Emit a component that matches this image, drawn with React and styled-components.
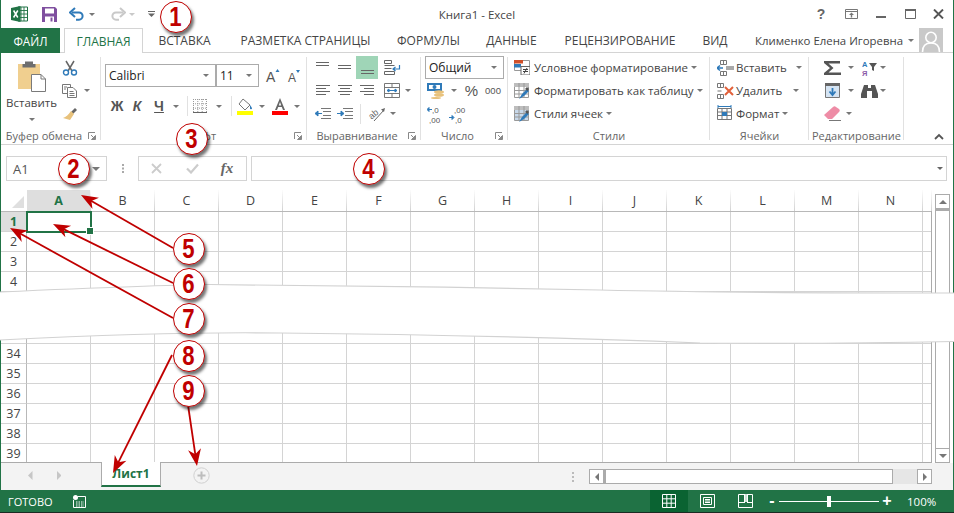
import React from "react";
import styled, { createGlobalStyle } from "styled-components";

const GlobalStyle = createGlobalStyle`
  html, body {
    margin: 0;
    padding: 0;
    overflow: hidden;
    background: #fff;
  }
  * { box-sizing: border-box; }
`;

const Window = styled.div`
  position: relative;
  display: flex;
  flex-direction: column;
  width: 954px;
  height: 513px;
  background: #fff;
  border-left: 1px solid #217346;
  border-right: 1px solid #217346;
  font-family: "Open Sans", "Noto Sans", sans-serif;
  font-size: 11.5px;
  color: #444;
`;

/* title bar */
const TitleBar = styled.div`
  display: flex;
  align-items: center;
  height: 28px;
  flex: none;
`;

const QuickSlot = styled.div`
  display: flex;
  align-items: center;
  justify-content: center;
  flex: none;
  width: ${p => p.$w}px;
  margin-left: ${p => p.$ml || 0}px;
`;

const TitleText = styled.div`
  position: absolute;
  left: 0;
  right: 0;
  top: 7px;
  text-align: center;
  font-size: 11.5px;
  color: #444;
  line-height: 16px;
`;

const WindowControls = styled.div`
  display: flex;
  align-items: center;
  margin-left: auto;
  padding-right: 1px;
`;

/* tabs */
const TabRow = styled.div`
  display: flex;
  align-items: stretch;
  height: 25px;
  flex: none;
  border-bottom: 1px solid #d4d4d4;
`;

const FileTab = styled.div`
  width: 59px;
  background: #217346;
  color: #fff;
  display: flex;
  align-items: center;
  justify-content: center;
  font-size: 11.8px;
  margin-bottom: -1px;
`;

const Tab = styled.div`
  width: ${p => p.$w}px;
  flex: none;
  display: flex;
  align-items: center;
  justify-content: center;
  font-size: 12px;
  color: ${p => (p.$active ? "#217346" : "#444")};
  background: #fff;
  ${p =>
    p.$active &&
    `
    margin-left: 4px;
    margin-bottom: -1px;
    border: 1px solid #d4d4d4;
    border-bottom: 0;
  `}
`;

const UserBox = styled.div`
  display: flex;
  align-items: center;
  margin-left: auto;
  padding-right: 5px;
  font-size: 11.4px;
  color: #444;
`;

const UserName = styled.span`
  margin-right: 5px;
`;

/* ribbon */
const Ribbon = styled.div`
  display: flex;
  height: 92px;
  flex: none;
  border-bottom: 1px solid #d4d4d4;
`;

const Group = styled.div`
  position: relative;
  display: flex;
  flex-direction: column;
  flex: none;
  width: ${p => p.$w}px;
  height: 91px;
  &::after {
    content: "";
    position: absolute;
    right: 0;
    top: 4px;
    bottom: 4px;
    width: 1px;
    background: ${p => (p.$plain ? "transparent" : "#e1e1e1")};
  }
`;

const GroupBody = styled.div`
  flex: 1;
  display: flex;
  flex-direction: ${p => p.$dir || "column"};
  padding: ${p => p.$pad || "3px 0 0 0"};
`;

const GroupLabel = styled.div`
  display: flex;
  justify-content: center;
  height: 14px;
  flex: none;
  margin-bottom: 1px;
  padding-right: ${p => (p.$launcher ? 14 : 0)}px;
  font-size: 11px;
  line-height: 14px;
  color: #666;
  white-space: nowrap;
`;

const Launcher = styled.svg`
  position: absolute;
  right: 5px;
  bottom: 4px;
  width: 8px;
  height: 8px;
`;

const CollapseButton = styled.div`
  position: absolute;
  right: 9px;
  bottom: 4px;
  display: flex;
`;

const BarRow = styled.div`
  display: flex;
  align-items: center;
  height: ${p => p.$h || 23}px;
  flex: none;
  padding-left: ${p => p.$left || 0}px;
  margin-top: ${p => p.$top || 0}px;
`;

const Slot = styled.div`
  display: flex;
  align-items: center;
  justify-content: center;
  flex: none;
  width: ${p => p.$w}px;
  height: 100%;
  background: ${p => (p.$on ? "#9fd5b7" : "transparent")};
`;

const Caret = styled.span`
  display: inline-block;
  flex: none;
  width: 0;
  height: 0;
  border-left: 3.5px solid transparent;
  border-right: 3.5px solid transparent;
  border-top: 3.5px solid ${p => p.$color || "#777"};
`;

const VSep = styled.div`
  width: 1px;
  height: 20px;
  flex: none;
  background: #e1e1e1;
`;

const PasteButton = styled.div`
  display: flex;
  flex-direction: column;
  align-items: center;
  width: 57px;
  padding: 5px 0 0 4px;
  font-size: 11.5px;
  line-height: 16px;
  color: #444;
`;

const PasteLabel = styled.span`
  margin: 3px 0 7px;
`;

const SmallColumn = styled.div`
  display: flex;
  flex-direction: column;
`;

const SelectBox = styled.div`
  display: flex;
  align-items: center;
  flex: none;
  width: ${p => p.$w}px;
  height: 23px;
  border: 1px solid #ababab;
  margin-left: ${p => p.$ml || 0}px;
  padding: 0 6px 0 3px;
  font-size: 12px;
  color: #222;
  & > span:first-child {
    flex: 1;
  }
`;

const FormatLetter = styled.span`
  font-family: "Liberation Sans", sans-serif;
  font-weight: bold;
  font-style: ${p => (p.$italic ? "italic" : "normal")};
  text-decoration: ${p => (p.$under ? "underline" : "none")};
  font-size: 14px;
  color: #555;
`;

const NumberGlyph = styled.span`
  font-family: "Liberation Sans", sans-serif;
  font-size: ${p => p.$size}px;
  color: #555;
`;

const StyleRow = styled.div`
  display: flex;
  align-items: center;
  height: 23px;
  flex: none;
  padding-left: ${p => p.$left}px;
  font-size: 11.5px;
  color: #444;
  white-space: nowrap;
`;

const StyleText = styled.span`
  margin: 0 ${p => p.$gap || 3}px 0 ${p => p.$lead || 4}px;
`;

/* formula bar */
const FormulaBar = styled.div`
  display: flex;
  align-items: flex-start;
  height: 45px;
  flex: none;
  padding: 11px 6px 0 5px;
`;

const NameBox = styled.div`
  display: flex;
  align-items: center;
  justify-content: space-between;
  width: 101px;
  height: 25px;
  border: 1px solid #d4d4d4;
  padding: 0 6px;
  font-size: 13px;
  color: #555;
`;

const Grip = styled.div`
  width: 31px;
  height: 25px;
  display: flex;
  align-items: center;
  justify-content: center;
`;

const FxBox = styled.div`
  display: flex;
  align-items: center;
  width: 109px;
  height: 25px;
  border: 1px solid #d4d4d4;
  padding-left: 5px;
`;

const FxSlot = styled.div`
  width: ${p => p.$w}px;
  display: flex;
  justify-content: center;
  flex: none;
`;

const FxText = styled.span`
  font-family: "Liberation Serif", serif;
  font-style: italic;
  font-weight: 700;
  font-size: 15px;
  color: #666;
`;

const FormulaInput = styled.div`
  flex: 1;
  height: 25px;
  margin-left: 4px;
  border: 1px solid #d4d4d4;
  display: flex;
  align-items: center;
  justify-content: flex-end;
  padding-right: 3px;
`;

/* sheet */
const SheetArea = styled.div`
  display: flex;
  height: 273px;
  flex: none;
`;

const Grid = styled.div`
  width: 931px;
  flex: none;
  display: flex;
  flex-direction: column;
  overflow: hidden;
  border-bottom: 1px solid #ababab;
`;

const Row = styled.div`
  display: flex;
  flex: none;
  height: ${p => p.$h || 20}px;
`;

const RowHead = styled.div`
  width: 26px;
  flex: none;
  display: flex;
  align-items: center;
  justify-content: center;
  border-right: 1px solid #b8b8b8;
  border-bottom: 1px solid #d4d4d4;
  font-size: 12.5px;
  font-weight: ${p => (p.$on ? 700 : 400)};
  color: ${p => (p.$on ? "#217346" : "#444")};
  background: ${p => (p.$on ? "#dedede" : "#fff")};
`;

const Corner = styled.div`
  width: 26px;
  flex: none;
  display: flex;
  align-items: flex-end;
  justify-content: flex-end;
  padding: 0 3px 3px 0;
  &::before {
    content: "";
    width: 0;
    height: 0;
    border-left: 12px solid transparent;
    border-bottom: 12px solid #dfdfdf;
  }
`;

const ColHead = styled.div`
  width: ${p => p.$w || 64}px;
  flex: none;
  display: flex;
  align-items: center;
  justify-content: center;
  font-size: 12.5px;
  font-weight: ${p => (p.$on ? 700 : 400)};
  color: ${p => (p.$on ? "#217346" : "#444")};
  background: ${p => (p.$on ? "#dedede" : "#fff")};
  border-style: solid;
  border-width: 0 1px 0 0;
  border-image: linear-gradient(#fff, #cfcfcf) 1;
`;

const ColHeadRow = styled(Row)`
  border-bottom: 1px solid #b8b8b8;
`;

const Cell = styled.div`
  width: ${p => p.$w || 64}px;
  flex: none;
  border-right: 1px solid #d4d4d4;
  border-bottom: 1px solid #d4d4d4;
`;

const ActiveCell = styled.div`
  position: relative;
  width: 64px;
  flex: none;
  outline: 2px solid #217346;
  outline-offset: -1px;
  &::after {
    content: "";
    position: absolute;
    right: -3px;
    bottom: -3px;
    width: 6px;
    height: 6px;
    background: #217346;
    border: 1px solid #fff;
  }
`;

const SheetEdge = styled.div`
  width: 1px;
  flex: none;
  margin: 21px 0 0 -1px;
  background: #ababab;
`;

const VScroll = styled.div`
  display: flex;
  flex-direction: column;
  width: 15px;
  flex: none;
  margin: 4px 0 0 3px;
`;

const ScrollButton = styled.div`
  width: 15px;
  height: 15px;
  flex: none;
  display: flex;
  align-items: center;
  justify-content: center;
  border: 1px solid #ababab;
  background: #fff;
`;

const VThumb = styled.div`
  flex: 1;
  border: 1px solid #ababab;
  border-top: 2px solid #ababab;
  border-bottom: 0;
  background: #fff;
`;

/* sheet tabs */
const TabBar = styled.div`
  display: flex;
  align-items: flex-start;
  height: 27px;
  flex: none;
  background: #f3f3f3;
`;

const NavArrows = styled.div`
  display: flex;
  align-items: center;
  justify-content: space-between;
  width: 100px;
  height: 25px;
  padding: 0 40px 0 27px;
`;

const SheetTab = styled.div`
  width: 60px;
  height: 25px;
  margin-top: -1px;
  display: flex;
  align-items: center;
  justify-content: center;
  background: #fff;
  border-left: 1px solid #ababab;
  border-right: 1px solid #ababab;
  border-bottom: 2px solid #217346;
  color: #217346;
  font-weight: 700;
  font-size: 12px;
`;

const AddSheet = styled.div`
  display: flex;
  align-items: center;
  height: 25px;
  margin-left: 32px;
`;

const HScroll = styled.div`
  display: flex;
  align-items: center;
  margin: 6px 0 0 auto;
  padding-right: 21px;
`;

const Dots = styled.div`
  display: flex;
  flex-direction: column;
  gap: 2px;
  margin-right: 15px;
  span {
    width: 2px;
    height: 2px;
    background: #bbb;
  }
`;

const HThumb = styled.div`
  width: 289px;
  height: 15px;
  background: #fff;
  border: 1px solid #ababab;
  border-left-width: 2px;
`;

const HTrack = styled.div`
  width: 24px;
  height: 15px;
  background: #e6e6e6;
`;

/* status bar */
const StatusBar = styled.div`
  display: flex;
  align-items: stretch;
  flex: 1;
  margin: 0 -1px;
  background: #217346;
  color: #fff;
  border-bottom: 1px solid #1b2a22;
  font-size: 11px;
`;

const StatusText = styled.span`
  display: flex;
  align-items: center;
  padding-left: 8px;
  width: 73px;
`;

const StatusIcon = styled.div`
  display: flex;
  align-items: center;
`;

const ViewButtons = styled.div`
  display: flex;
  margin-left: auto;
`;

const ViewButton = styled.div`
  width: 38px;
  display: flex;
  align-items: center;
  justify-content: center;
  background: ${p => (p.$on ? "#0a6332" : "transparent")};
`;

const Zoom = styled.div`
  display: flex;
  align-items: center;
  width: 190px;
  padding-left: 5px;
`;

const ZoomTrack = styled.div`
  position: relative;
  width: 100px;
  height: 1px;
  margin: 0 5px 0 4px;
  background: #fff;
  &::after {
    content: "";
    position: absolute;
    left: 48px;
    top: -5px;
    width: 4px;
    height: 11px;
    background: #fff;
  }
`;

const ZoomSign = styled.span`
  width: 6px;
  display: flex;
  justify-content: center;
  font-family: "Liberation Sans", sans-serif;
  font-weight: 700;
  font-size: 16px;
`;

const ZoomValue = styled.span`
  margin-left: 17px;
  font-size: 11.5px;
`;

/* overlays */
const TearSvg = styled.svg`
  position: absolute;
  left: -1px;
  top: 280px;
  width: 954px;
  height: 70px;
`;

const ArrowLayer = styled.svg`
  position: absolute;
  left: -1px;
  top: 0;
  width: 954px;
  height: 513px;
  pointer-events: none;
`;

const Callout = styled.div`
  position: absolute;
  left: ${p => p.$x - 17}px;
  top: ${p => p.$y - 16}px;
  width: 32px;
  height: 32px;
  border-radius: 50%;
  background: #fff;
  border: 1px solid #c00000;
  box-shadow: 2px 3px 3px rgba(0, 0, 0, 0.55);
  display: flex;
  align-items: center;
  justify-content: center;
  color: #c00000;
  font-family: "Liberation Sans", sans-serif;
  font-weight: 700;
  font-size: 27px;
  line-height: 1;
  & > span {
    display: block;
    transform: scaleX(0.82);
  }
`;

const HelpMark = styled.span`
  font-family: "Liberation Sans", sans-serif;
  font-weight: 700;
  font-size: 14px;
  color: #666;
`;

/* icons */
const Excel = () => (
  <svg width="17" height="16" viewBox="0 0 17 16">
    <path d="M7 1h9.500v14H7z" fill="#fff" stroke="#217346" />
    <path d="M10 1v14M13 1v14M7 4.500h9.500M7 8h9.500M7 11.500h9.500" stroke="#217346" strokeWidth=".9" />
    <path d="M0 2l9.500-2v16L0 14z" fill="#217346" />
    <path d="M2.600 4.500l4.200 7M6.800 4.500l-4.200 7" stroke="#fff" strokeWidth="1.500" />
  </svg>
);

const Save = () => (
  <svg width="15" height="15" viewBox="0 0 15 15">
    <path d="M0 0h13l2 2v13H0z" fill="#7f4f9f" />
    <path d="M3 1.500h9v5H3z" fill="#fff" />
    <path d="M3 9.500h9V15H3z" fill="#fff" />
    <path d="M8.500 10.500h2v4h-2z" fill="#7f4f9f" />
  </svg>
);

const Undo = ({ color = "#2f7ab9", flip }) => (
  <svg width="16" height="14" viewBox="0 0 16 14" style={flip ? { transform: "scaleX(-1)" } : undefined}>
    <path d="M3 5.500h7a3.600 3.600 0 0 1 0 7.200H7" fill="none" stroke={color} strokeWidth="2" />
    <path d="M6 1L1 5.500 6 10" fill="none" stroke={color} strokeWidth="2" />
  </svg>
);

const QatMenu = () => (
  <svg width="7" height="6" viewBox="0 0 7 6">
    <path d="M0 0h7v1H0z" fill="#666" />
    <path d="M0 2.500h7L3.500 6z" fill="#666" />
  </svg>
);

const RibbonMode = () => (
  <svg width="13" height="10" viewBox="0 0 13 10">
    <path d="M.5.500h12v9H.5z" fill="none" stroke="#777" />
    <path d="M0 2.500h13" stroke="#777" />
    <path d="M6.500 3.500L4 6h1.800v2.500h1.400V6H9z" fill="#777" />
  </svg>
);

const MinIcon = () => (
  <svg width="11" height="10" viewBox="0 0 11 10">
    <path d="M0 7h10v2H0z" fill="#666" />
  </svg>
);

const MaxIcon = () => (
  <svg width="11" height="10" viewBox="0 0 11 10">
    <path d="M.5 1.500h10v8H.5z" fill="none" stroke="#666" />
    <path d="M0 0h11v2H0z" fill="#666" />
  </svg>
);

const CloseIcon = () => (
  <svg width="11" height="10" viewBox="0 0 11 10">
    <path d="M1 .5l9 9M10 .5l-9 9" stroke="#555" strokeWidth="1.900" />
  </svg>
);

const Avatar = () => (
  <svg width="24" height="24" viewBox="0 0 24 24">
    <path d="M0 0h24v24H0z" fill="#c9c9c9" />
    <circle cx="12" cy="9.500" r="5.200" fill="none" stroke="#fff" strokeWidth="1.600" />
    <path d="M3.500 24c0-6 3.500-9 8.500-9s8.500 3 8.500 9" fill="none" stroke="#fff" strokeWidth="1.600" />
  </svg>
);

const PasteIcon = () => (
  <svg width="30" height="31" viewBox="0 0 30 31">
    <path d="M1 3h22v25H1z" fill="#f0cf8f" />
    <path d="M8 3V.5h8V3h2.500v3.500h-13V3z" fill="#6e6e6e" />
    <path d="M14.500 13.500H24l4.500 4.500v12.500h-14z" fill="#fff" stroke="#7a7a7a" />
    <path d="M24 13.500V18h4.500" fill="none" stroke="#7a7a7a" />
  </svg>
);

const Scissors = () => (
  <svg width="16" height="16" viewBox="0 0 16 16">
    <path d="M4 1l6 10M12 1L6 11" stroke="#666" strokeWidth="1.500" />
    <circle cx="4" cy="12.500" r="2.500" fill="none" stroke="#2f7ab9" strokeWidth="1.400" />
    <circle cx="12" cy="12.500" r="2.500" fill="none" stroke="#2f7ab9" strokeWidth="1.400" />
  </svg>
);

const CopyIcon = () => (
  <svg width="16" height="14" viewBox="0 0 16 14">
    <path d="M.5.500h8v9h-8z" fill="#fff" stroke="#777" />
    <path d="M5.500 3.500H11L14.500 7v6.500h-9z" fill="#fff" stroke="#777" />
    <path d="M2 3h3M2 5h2M7.500 7.500h4M7.500 9.500h5M7.500 11.500h5" stroke="#777" />
  </svg>
);

const Painter = () => (
  <svg width="16" height="14" viewBox="0 0 16 14">
    <path d="M9 5l4-4 2 2-4 4z" fill="#666" />
    <path d="M9 4l3 3-4 6-7-2c3-1 5-3 8-7z" fill="#e8c27c" />
  </svg>
);

const GrowA = ({ up }) => (
  <svg width="20" height="16" viewBox="0 0 20 16">
    <text x="5" y="14" fontFamily="Liberation Sans, sans-serif" fontSize={up ? 14 : 12} fill="#555">
      A
    </text>
    <path d={up ? "M14.500 4h4l-2-3z" : "M13 2h4l-2 3z"} fill="#2f7ab9" />
  </svg>
);

const BorderIcon = () => (
  <svg width="14" height="14" viewBox="0 0 14 14">
    <path
      d="M.5 0v14M4.800 0v14M9.200 0v14M13.500 0v14M0 .5h14M0 4.800h14M0 9.200h14"
      stroke="#999"
      strokeDasharray="1 1"
      fill="none"
    />
    <path d="M0 13.500h14" stroke="#666" />
  </svg>
);

const FillIcon = () => (
  <svg width="16" height="17" viewBox="0 0 16 17">
    <path d="M6 1l7 6-5 5-6-6z" fill="#fff" stroke="#777" />
    <path d="M13 7c1 1.500 2 2.500 2 3.500s-2 1-2 0z" fill="#2f7ab9" />
    <path d="M0 13h16v4H0z" fill="#ffff00" />
  </svg>
);

const ColorA = () => (
  <svg width="16" height="17" viewBox="0 0 16 17">
    <path d="M3 12L8 0l5 12h-2L9.800 9H6.200L5 12zM6.800 7.500h2.400L8 4z" fill="#666" fillRule="evenodd" />
    <path d="M0 13h16v4H0z" fill="#ff0000" />
  </svg>
);

const Launch = () => (
  <Launcher viewBox="0 0 8 8">
    <path d="M.5 7V.5H7" fill="none" stroke="#888" />
    <path d="M3 3l3.500 3.500M7.500 3.500v4h-4z" fill="#888" stroke="#888" />
  </Launcher>
);

const Lines = ({ rows }) => (
  <svg width="14" height="13" viewBox="0 0 14 13">
    {rows.map(([y, x1, x2]) => (
      <path key={y} d={`M${x1} ${y}.5H${x2}`} stroke="#666" />
    ))}
  </svg>
);

const WrapIcon = () => (
  <svg width="17" height="15" viewBox="0 0 17 15">
    <path d="M.5.500h7v3h-7zM.5 5.500h10M.5 8.500h7M.5 11.500h10v3H.5z" fill="none" stroke="#666" />
    <path d="M15.500 5v4h-6M11.500 7L9 9l2.500 2" fill="none" stroke="#2f7ab9" strokeWidth="1.200" />
  </svg>
);

const MergeIcon = () => (
  <svg width="16" height="15" viewBox="0 0 16 15">
    <path d="M.5.500h15v14H.5zM.5 4.500h15M.5 10.500h15M8 .5v4M8 10.500v4" fill="none" stroke="#777" />
    <path d="M3 7.500h10M3 7.500L5 6v3zM13 7.500L11 6v3z" fill="#2f7ab9" stroke="#2f7ab9" />
  </svg>
);

const IndentIcon = ({ right }) => (
  <svg width="16" height="11" viewBox="0 0 16 11">
    <path d="M6 .5h10M8 3.500h8M8 7.500h8M6 10.500h10" stroke="#777" />
    {right ? (
      <path d="M0 5.500h4M7 5.500L4 3v5z" stroke="#2f7ab9" fill="#2f7ab9" />
    ) : (
      <path d="M7 5.500H3M0 5.500L3 3v5z" stroke="#2f7ab9" fill="#2f7ab9" />
    )}
  </svg>
);

const OrientIcon = () => (
  <svg width="22" height="18" viewBox="0 0 22 18">
    <text x="3" y="12" transform="rotate(-40 8 10)" fontFamily="Liberation Sans, sans-serif" fontSize="9" fill="#666">
      ab
    </text>
    <path d="M8 16L18 5" stroke="#666" />
    <path d="M19 3l-1 4-3-2.500z" fill="#666" />
  </svg>
);

const CurrencyIcon = () => (
  <svg width="18" height="16" viewBox="0 0 18 16">
    <path d="M0 0h15v8H0z" fill="#2f7ab9" />
    <path d="M2 2h11v4H2z" fill="#fff" />
    <circle cx="7.500" cy="4" r="2" fill="#2f7ab9" />
    <ellipse cx="12" cy="9" rx="5" ry="1.800" fill="#e8c27c" />
    <ellipse cx="12" cy="12" rx="5" ry="1.800" fill="#e8c27c" />
    <ellipse cx="9" cy="15" rx="5" ry="1" fill="#e8c27c" />
  </svg>
);

const DecimalIcon = ({ more }) => (
  <svg width="19" height="20" viewBox="0 0 19 20">
    <text x="5" y="9" fontFamily="Liberation Sans, sans-serif" fontSize="8" fill="#555">
      {more ? ",00" : ",0"}
    </text>
    <text x={more ? 6 : 2} y="18.500" fontFamily="Liberation Sans, sans-serif" fontSize="8" fill="#555">
      {more ? ",0" : ",00"}
    </text>
    <path
      d={more ? "M0 13.500h4M5 13.500l-2-2v4z" : "M1 5.500h4M0 5.500l2-2v4z"}
      stroke="#2f7ab9"
      fill="#2f7ab9"
    />
  </svg>
);

const CondIcon = () => (
  <svg width="16" height="15" viewBox="0 0 16 15">
    <path d="M.5.500h15v10H.5z" fill="#fff" stroke="#999" />
    <path d="M0 0h9v3.500H0z" fill="#d0502a" />
    <path d="M0 4h7v3.500H0z" fill="#2f7ab9" />
    <path d="M7 6.500h9V15H7z" fill="#fff" stroke="#666" />
    <path d="M9 9.500h5M9 11.500h5M13 8l-3 5.500" stroke="#444" />
  </svg>
);

const TableIcon = ({ pale }) => (
  <svg width="16" height="16" viewBox="0 0 16 16">
    <path d="M.5.500h14v14H.5z" fill={pale ? "#c7d8ea" : "#fff"} stroke="#999" />
    <path d="M0 0h15v4H0z" fill="#bdbdbd" />
    <path d="M5 0v15M10 0v15M0 7.500h15M0 11h15" stroke="#999" />
    <path d="M5 16l3-5 5-5 2 2-5 5z" fill="#2f7ab9" />
    <path d="M11 6l2-2 2 2-1.500 2z" fill="#555" />
  </svg>
);

const CellsInsert = () => (
  <svg width="17" height="16" viewBox="0 0 17 16">
    <path d="M3.500.500h6v4h-6zM3.500 11.500h6v4h-6zM6.500.5v4M6.500 11.500v4" fill="none" stroke="#777" />
    <path d="M9 6h8v4H9z" fill="#a9a9a9" />
    <path d="M0 8h6M3 5.500L0 8l3 2.500" fill="none" stroke="#2f7ab9" strokeWidth="1.600" />
  </svg>
);

const CellsDelete = () => (
  <svg width="17" height="16" viewBox="0 0 17 16">
    <path d="M.5.500h6v4h-6zM.5 11.500h6v4h-6zM3.500.5v4M3.500 11.500v4M.5 8h4" fill="none" stroke="#777" />
    <path d="M8 4l8 8M16 4l-8 8" stroke="#e2603a" strokeWidth="2" />
  </svg>
);

const CellsFormat = () => (
  <svg width="17" height="17" viewBox="0 0 17 17">
    <path d="M1 0v3M14 0v3M1 1.500h13" stroke="#2f7ab9" />
    <path d="M.5 3.500h14v11H.5zM.5 7h14M.5 10.500h14M5 3.500v11M10 3.500v11" fill="none" stroke="#777" />
    <path d="M5 7h5v4H5z" fill="#2f7ab9" />
  </svg>
);

const SigmaIcon = () => (
  <svg width="17" height="14" viewBox="0 0 17 14">
    <path d="M0 0h16v2.500H4.500l5 4.500-5 4.500H17V14H0v-2l6-5-6-5z" fill="#555" />
  </svg>
);

const SortIcon = () => (
  <svg width="15" height="19" viewBox="0 0 15 19">
    <text x="0" y="9" fontFamily="Liberation Sans, sans-serif" fontWeight="700" fontSize="7.500" fill="#2f7ab9">
      А
    </text>
    <text x="0" y="18" fontFamily="Liberation Sans, sans-serif" fontWeight="700" fontSize="7.500" fill="#8a5aa8">
      Я
    </text>
    <path d="M7 5h8l-3 4v4l-2-1V9z" fill="#555" />
  </svg>
);

const FillDown = () => (
  <svg width="15" height="15" viewBox="0 0 15 15">
    <path d="M.5 1.500h14v13H.5z" fill="#d5e4f3" stroke="#777" />
    <path d="M0 0h15v3H0z" fill="#666" />
    <path d="M7.500 5v6M4.500 8.500l3 3.500 3-3.500" fill="none" stroke="#2f7ab9" strokeWidth="1.800" />
  </svg>
);

const Binoculars = () => (
  <svg width="17" height="14" viewBox="0 0 17 14">
    <path d="M3 1h4v3h3V1h4l3 9v4h-6V7H6v7H0v-4z" fill="#555" />
  </svg>
);

const Eraser = () => (
  <svg width="17" height="15" viewBox="0 0 17 15">
    <path d="M0 9l9-8c1-1 2-1 3 0l3 2c1 1 1 2 0 3l-7 7H4z" fill="#ee8ca6" />
    <path d="M5 14.500h12" stroke="#777" />
  </svg>
);

const ChevronUp = () => (
  <svg width="10" height="7" viewBox="0 0 10 7">
    <path d="M1 6l4-4 4 4" fill="none" stroke="#555" strokeWidth="1.800" />
  </svg>
);

const Triangle = ({ dir, color = "#777", s = 4 }) => {
  const d = {
    left: "M4 0v8L0 4z",
    right: "M0 0v8l4-4z",
    up: "M0 4h8L4 0z",
    down: "M0 0h8L4 4z"
  }[dir];
  const wide = dir === "up" || dir === "down";
  return (
    <svg width={wide ? s * 2 : s} height={wide ? s : s * 2} viewBox={wide ? "0 0 8 4" : "0 0 4 8"}>
      <path d={d} fill={color} />
    </svg>
  );
};

const AddIcon = () => (
  <svg width="17" height="17" viewBox="0 0 17 17">
    <circle cx="8.500" cy="8.500" r="7.700" fill="none" stroke="#d0d0d0" />
    <path d="M4.500 8.500h8M8.500 4.500v8" stroke="#bdbdbd" strokeWidth="2" />
  </svg>
);

const MacroIcon = () => (
  <svg width="13" height="13" viewBox="0 0 13 13">
    <path d="M4.500 1.500h8v11H.5V5" fill="none" stroke="#fff" />
    <circle cx="2.500" cy="2.500" r="2.500" fill="#fff" />
    <path d="M3 7h8M3 9h8M3 11h8" stroke="#fff" strokeDasharray="1.500 1" />
  </svg>
);

const ViewNormal = () => (
  <svg width="14" height="14" viewBox="0 0 14 14">
    <path d="M.5.500h13v13H.5zM.5 4.800h13M.5 9.200h13M4.800.5v13M9.200.5v13" fill="none" stroke="#fff" />
  </svg>
);

const ViewLayout = () => (
  <svg width="15" height="14" viewBox="0 0 15 14">
    <path d="M.5.500h14v13H.5zM3.500 3.500h8v7h-8z" fill="none" stroke="#fff" />
    <path d="M5 5.500h5M5 7h5M5 8.500h5" stroke="#fff" />
  </svg>
);

const ViewBreak = () => (
  <svg width="15" height="14" viewBox="0 0 15 14">
    <path d="M.5.500h14v13H.5z" fill="none" stroke="#fff" />
    <path d="M6 0h3v8H6z" fill="#cfe3d8" />
    <path d="M0 8h6V0h1v9H0zM9 0h1v8h5v1H9z" fill="#fff" />
  </svg>
);

const Arrow = ({ x1, y1, x2, y2 }) => {
  const dx = x2 - x1;
  const dy = y2 - y1;
  const len = Math.hypot(dx, dy);
  const ux = dx / len;
  const uy = dy / len;
  const px = -uy;
  const py = ux;
  const pt = (along, side) => `${x2 - ux * along + px * side},${y2 - uy * along + py * side}`;
  return (
    <g>
      <line x1={x1} y1={y1} x2={x2 - ux * 10} y2={y2 - uy * 10} stroke="#c00000" strokeWidth="1.800" />
      <polygon points={`${x2},${y2} ${pt(17, 6.5)} ${pt(12, 0)} ${pt(17, -6.5)}`} fill="#c00000" />
    </g>
  );
};

const columns = ["A", "B", "C", "D", "E", "F", "G", "H", "I", "J", "K", "L", "M", "N"];
const topRows = [1, 2, 3, 4];
const bottomRows = [34, 35, 36, 37, 38, 39];

const arrows = [
  { x1: 173, y1: 248, x2: 81, y2: 195 },
  { x1: 173, y1: 283, x2: 53, y2: 224 },
  { x1: 173, y1: 318, x2: 10, y2: 228 },
  { x1: 172, y1: 355, x2: 113, y2: 473 },
  { x1: 188, y1: 405, x2: 197, y2: 466 }
];

const callouts = [
  { n: 1, x: 176, y: 17 },
  { n: 2, x: 74, y: 169 },
  { n: 3, x: 192, y: 139 },
  { n: 4, x: 369, y: 169 },
  { n: 5, x: 189, y: 249 },
  { n: 6, x: 189, y: 284 },
  { n: 7, x: 189, y: 319 },
  { n: 8, x: 189, y: 356 },
  { n: 9, x: 189, y: 391 }
];

const TOP_EDGE = "M0 12 C90 8 160 5 210 4.5 C320 5 474 7.5 600 10 C690 12 800 13 954 13";
const BOTTOM_EDGE = "M954 61.5 C860 63.5 760 63.5 700 63 C600 59 474 55 280 53 C210 52 100 55 0 60";

const SheetRow = ({ label, selected }) => (
  <Row>
    <RowHead $on={selected}>{label}</RowHead>
    {columns.map(c =>
      selected && c === "A" ? <ActiveCell key={c} /> : <Cell key={c} />
    )}
    <Cell $w={9} />
  </Row>
);

function App() {
  return (
    <>
      <GlobalStyle />
      <Window>
        <TitleBar>
          <QuickSlot $w={37}><Excel /></QuickSlot>
          <QuickSlot $w={22}><Save /></QuickSlot>
          <QuickSlot $ml={9} $w={16}><Undo /></QuickSlot>
          <QuickSlot $ml={3} $w={8}><Caret /></QuickSlot>
          <QuickSlot $ml={14} $w={16}><Undo color="#c9c9c9" flip /></QuickSlot>
          <QuickSlot $ml={2} $w={8}><Caret $color="#c9c9c9" /></QuickSlot>
          <QuickSlot $ml={11} $w={8}><QatMenu /></QuickSlot>
          <TitleText>Книга1 - Excel</TitleText>
          <WindowControls>
            <QuickSlot $w={30}><HelpMark>?</HelpMark></QuickSlot>
            <QuickSlot $w={30}><RibbonMode /></QuickSlot>
            <QuickSlot $w={30}><MinIcon /></QuickSlot>
            <QuickSlot $w={28}><MaxIcon /></QuickSlot>
            <QuickSlot $w={28}><CloseIcon /></QuickSlot>
          </WindowControls>
        </TitleBar>

        <TabRow>
          <FileTab>ФАЙЛ</FileTab>
          <Tab $active $w={79}>ГЛАВНАЯ</Tab>
          <Tab $w={83}>ВСТАВКА</Tab>
          <Tab $w={159}>РАЗМЕТКА СТРАНИЦЫ</Tab>
          <Tab $w={87}>ФОРМУЛЫ</Tab>
          <Tab $w={79}>ДАННЫЕ</Tab>
          <Tab $w={138}>РЕЦЕНЗИРОВАНИЕ</Tab>
          <Tab $w={52}>ВИД</Tab>
          <UserBox>
            <UserName>Клименко Елена Игоревна</UserName>
            <Caret />
            <QuickSlot $w={34}><Avatar /></QuickSlot>
          </UserBox>
        </TabRow>

        <Ribbon>
          <Group $w={100}>
            <GroupBody $dir="row">
              <PasteButton>
                <PasteIcon />
                <PasteLabel>Вставить</PasteLabel>
                <Caret />
              </PasteButton>
              <SmallColumn>
                <BarRow><Slot $w={24}><Scissors /></Slot></BarRow>
                <BarRow>
                  <Slot $w={24}><CopyIcon /></Slot>
                  <Slot $w={10}><Caret /></Slot>
                </BarRow>
                <BarRow><Slot $w={24}><Painter /></Slot></BarRow>
              </SmallColumn>
            </GroupBody>
            <GroupLabel $launcher>Буфер обмена</GroupLabel>
            <Launch />
          </Group>

          <Group $w={206}>
            <GroupBody $pad="11px 0 0 0">
              <BarRow $left={4}>
                <SelectBox $w={111}>
                  <span>Calibri</span>
                  <Caret />
                </SelectBox>
                <SelectBox $w={43}>
                  <span>11</span>
                  <Caret />
                </SelectBox>
                <Slot $w={24}><GrowA up /></Slot>
                <Slot $w={20}><GrowA /></Slot>
              </BarRow>
              <BarRow $h={22} $top={8} $left={6}>
                <Slot $w={20}><FormatLetter>Ж</FormatLetter></Slot>
                <Slot $w={20}><FormatLetter $italic>К</FormatLetter></Slot>
                <Slot $w={24}><FormatLetter $under>Ч</FormatLetter></Slot>
                <Slot $w={10}><Caret /></Slot>
                <Slot $w={12}><VSep /></Slot>
                <Slot $w={14}><BorderIcon /></Slot>
                <Slot $w={24}><Caret /></Slot>
                <VSep />
                <Slot $w={26}><FillIcon /></Slot>
                <Slot $w={8}><Caret /></Slot>
                <Slot $w={28}><ColorA /></Slot>
                <Slot $w={6}><Caret /></Slot>
              </BarRow>
            </GroupBody>
            <GroupLabel $launcher>Шрифт</GroupLabel>
            <Launch />
          </Group>

          <Group $w={114}>
            <GroupBody>
              <BarRow $left={5}>
                <Slot $w={22}><Lines rows={[[1, 0, 13], [4, 0, 13]]} /></Slot>
                <Slot $w={22}><Lines rows={[[4, 0, 13], [7, 0, 13]]} /></Slot>
                <Slot $w={22} $on><Lines rows={[[9, 1, 14], [12, 1, 14]]} /></Slot>
                <Slot $w={28}><WrapIcon /></Slot>
              </BarRow>
              <BarRow $left={5}>
                <Slot $w={22}><Lines rows={[[1, 0, 14], [4, 0, 10], [7, 0, 14], [10, 0, 10]]} /></Slot>
                <Slot $w={22}><Lines rows={[[1, 0, 14], [4, 2, 12], [7, 0, 14], [10, 2, 12]]} /></Slot>
                <Slot $w={22}><Lines rows={[[1, 0, 14], [4, 4, 14], [7, 0, 14], [10, 4, 14]]} /></Slot>
                <Slot $w={28}><MergeIcon /></Slot>
                <Slot $w={4}><Caret /></Slot>
              </BarRow>
              <BarRow $left={5}>
                <Slot $w={22}><IndentIcon /></Slot>
                <Slot $w={22}><IndentIcon right /></Slot>
                <Slot $w={8}><VSep /></Slot>
                <Slot $w={26}><OrientIcon /></Slot>
                <Slot $w={5}><Caret /></Slot>
              </BarRow>
            </GroupBody>
            <GroupLabel $launcher>Выравнивание</GroupLabel>
            <Launch />
          </Group>

          <Group $w={87}>
            <GroupBody>
              <BarRow>
                <SelectBox $w={79} $ml={4}>
                  <span>Общий</span>
                  <Caret />
                </SelectBox>
              </BarRow>
              <BarRow $left={4}>
                <Slot $w={22}><CurrencyIcon /></Slot>
                <Slot $w={14}><Caret /></Slot>
                <Slot $w={21}><NumberGlyph $size={15}>%</NumberGlyph></Slot>
                <Slot $w={22}><NumberGlyph $size={9.5}>000</NumberGlyph></Slot>
              </BarRow>
              <BarRow $left={4}>
                <Slot $w={22}><DecimalIcon /></Slot>
                <Slot $w={22}><DecimalIcon more /></Slot>
              </BarRow>
            </GroupBody>
            <GroupLabel $launcher>Число</GroupLabel>
            <Launch />
          </Group>

          <Group $w={202}>
            <GroupBody>
              <StyleRow $left={6}>
                <CondIcon />
                <StyleText>Условное форматирование</StyleText>
                <Caret />
              </StyleRow>
              <StyleRow $left={6}>
                <TableIcon />
                <StyleText>Форматировать как таблицу</StyleText>
                <Caret />
              </StyleRow>
              <StyleRow $left={6}>
                <TableIcon pale />
                <StyleText>Стили ячеек</StyleText>
                <Caret />
              </StyleRow>
            </GroupBody>
            <GroupLabel>Стили</GroupLabel>
          </Group>

          <Group $w={99}>
            <GroupBody>
              <StyleRow $left={7}>
                <CellsInsert />
                <StyleText $lead={2} $gap={9}>Вставить</StyleText>
                <Caret />
              </StyleRow>
              <StyleRow $left={7}>
                <CellsDelete />
                <StyleText $lead={2} $gap={11}>Удалить</StyleText>
                <Caret />
              </StyleRow>
              <StyleRow $left={7}>
                <CellsFormat />
                <StyleText $lead={2}>Формат</StyleText>
                <Caret />
              </StyleRow>
            </GroupBody>
            <GroupLabel>Ячейки</GroupLabel>
          </Group>

          <Group $w={95}>
            <GroupBody>
              <BarRow $left={12}>
                <Slot $w={22}><SigmaIcon /></Slot>
                <Slot $w={15}><Caret /></Slot>
                <Slot $w={22}><SortIcon /></Slot>
                <Slot $w={6}><Caret /></Slot>
              </BarRow>
              <BarRow $left={12}>
                <Slot $w={22}><FillDown /></Slot>
                <Slot $w={15}><Caret /></Slot>
                <Slot $w={22}><Binoculars /></Slot>
                <Slot $w={6}><Caret /></Slot>
              </BarRow>
              <BarRow $left={12}>
                <Slot $w={22}><Eraser /></Slot>
                <Slot $w={11}><Caret /></Slot>
              </BarRow>
            </GroupBody>
            <GroupLabel>Редактирование</GroupLabel>
          </Group>

          <Group $w={49} $plain>
            <GroupBody />
            <CollapseButton><ChevronUp /></CollapseButton>
          </Group>
        </Ribbon>

        <FormulaBar>
          <NameBox>
            <span>A1</span>
            <Triangle dir="down" />
          </NameBox>
          <Grip>
            <svg width="2" height="9" viewBox="0 0 2 9">
              <path d="M0 0h2v2H0zM0 3.500h2v2H0zM0 7h2v2H0z" fill="#aaa" />
            </svg>
          </Grip>
          <FxBox>
            <FxSlot $w={25}>
              <svg width="11" height="11" viewBox="0 0 11 11">
                <path d="M1 1l9 9M10 1l-9 9" stroke="#ccc" strokeWidth="1.800" />
              </svg>
            </FxSlot>
            <FxSlot $w={47}>
              <svg width="13" height="11" viewBox="0 0 13 11">
                <path d="M1 5.500l4 4 7-8" fill="none" stroke="#ccc" strokeWidth="2.200" />
              </svg>
            </FxSlot>
            <FxSlot $w={22}><FxText>fx</FxText></FxSlot>
          </FxBox>
          <FormulaInput><Caret $color="#666" /></FormulaInput>
        </FormulaBar>

        <SheetArea>
          <Grid>
            <ColHeadRow $h={22}>
              <Corner />
              {columns.map(c => (
                <ColHead key={c} $on={c === "A"}>{c}</ColHead>
              ))}
              <ColHead $w={9} />
            </ColHeadRow>
            {topRows.map(n => (
              <SheetRow key={n} label={n} selected={n === 1} />
            ))}
            <Row $h={52}>
              <RowHead />
              {columns.map(c => <Cell key={c} />)}
              <Cell $w={9} />
            </Row>
            {bottomRows.map(n => (
              <SheetRow key={n} label={n} />
            ))}
          </Grid>
          <SheetEdge />
          <VScroll>
            <ScrollButton><Triangle dir="up" /></ScrollButton>
            <VThumb />
            <ScrollButton><Triangle dir="down" /></ScrollButton>
          </VScroll>
        </SheetArea>

        <TabBar>
          <NavArrows>
            <Triangle dir="left" color="#c6c6c6" s={4.5} />
            <Triangle dir="right" color="#c6c6c6" s={4.5} />
          </NavArrows>
          <SheetTab>Лист1</SheetTab>
          <AddSheet><AddIcon /></AddSheet>
          <HScroll>
            <Dots><span /><span /><span /></Dots>
            <ScrollButton><Triangle dir="left" /></ScrollButton>
            <HThumb />
            <HTrack />
            <ScrollButton><Triangle dir="right" /></ScrollButton>
          </HScroll>
        </TabBar>

        <StatusBar>
          <StatusText>ГОТОВО</StatusText>
          <StatusIcon><MacroIcon /></StatusIcon>
          <ViewButtons>
            <ViewButton $on><ViewNormal /></ViewButton>
            <ViewButton><ViewLayout /></ViewButton>
            <ViewButton><ViewBreak /></ViewButton>
          </ViewButtons>
          <Zoom>
            <ZoomSign>-</ZoomSign>
            <ZoomTrack />
            <ZoomSign>+</ZoomSign>
            <ZoomValue>100%</ZoomValue>
          </Zoom>
        </StatusBar>

        <TearSvg viewBox="0 0 954 70">
          <path d={`${TOP_EDGE} L954 61.5 ${BOTTOM_EDGE.slice(BOTTOM_EDGE.indexOf("C"))} Z`} fill="#fff" />
          <path d={TOP_EDGE} fill="none" stroke="#d2d2d2" strokeWidth="1.200" />
          <path d={BOTTOM_EDGE} fill="none" stroke="#d2d2d2" strokeWidth="1.200" />
        </TearSvg>

        <ArrowLayer viewBox="0 0 954 513">
          {arrows.map(a => (
            <Arrow key={a.y2} {...a} />
          ))}
        </ArrowLayer>

        {callouts.map(c => (
          <Callout key={c.n} $x={c.x} $y={c.y}>
            <span>{c.n}</span>
          </Callout>
        ))}
      </Window>
    </>
  );
}

export default App;
